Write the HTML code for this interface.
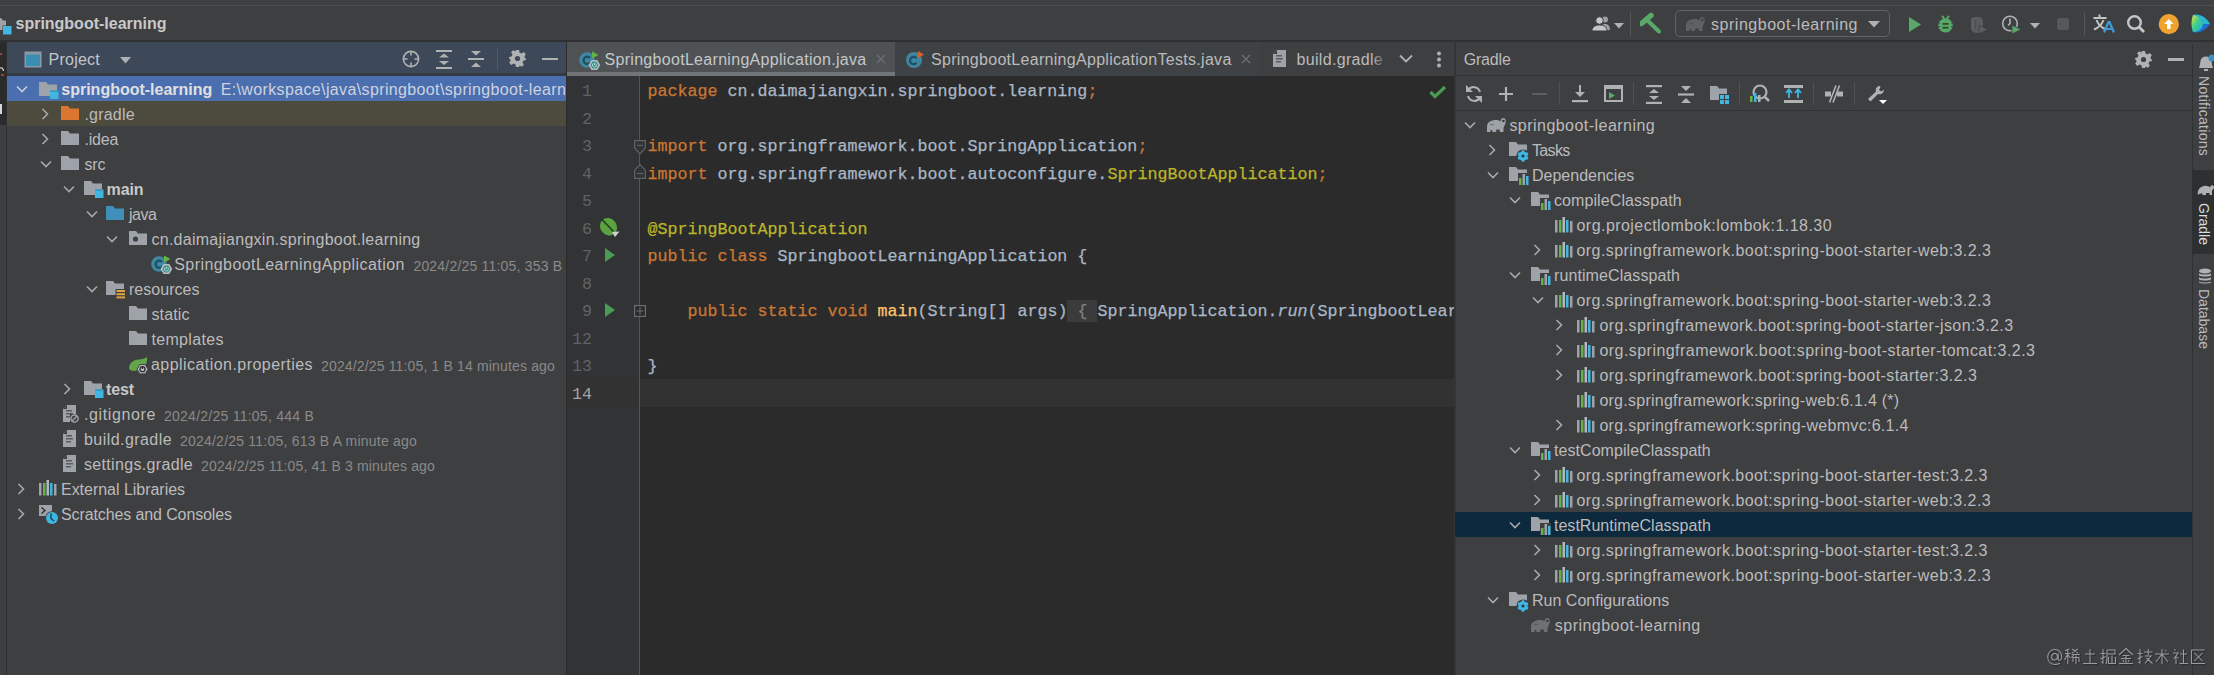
<!DOCTYPE html>
<html><head><meta charset="utf-8"><style>
html,body{margin:0;padding:0;width:2214px;height:675px;overflow:hidden;background:#3e3f41;position:relative}
</style></head><body>
<div style="position:absolute;left:0px;top:0px;width:2214px;height:41px;background:#3e3f41;"></div>
<div style="position:absolute;left:0px;top:5px;width:2214px;height:1px;background:#4d5053;"></div>
<svg style="position:absolute;left:0px;top:17px;" width="13" height="18" viewBox="0 0 13 18"><path d="M-6 1h7l2 2.5h3v9.5h-12z" fill="#9da3a8"/><rect x="2.5" y="8.5" width="9" height="9" fill="#3e3f41"/><rect x="3" y="9" width="8.5" height="8.5" fill="#40b6e0"/></svg>
<div style="position:absolute;left:15.5px;top:14.46px;line-height:20px;font-family:'Liberation Sans', sans-serif;font-size:16px;font-weight:700;font-style:normal;color:#c9c9c9;letter-spacing:-0.006px;white-space:pre;">springboot-learning</div>
<svg style="position:absolute;left:1591px;top:16px;" width="22" height="16" viewBox="0 0 22 16"><circle cx="14" cy="3.5" r="3" fill="#9da0a3"/><path d="M9 15 C9 10 11 8 14 8 C17 8 19 10 19 14 Z" fill="#9da0a3"/><circle cx="8.5" cy="4.5" r="3.8" fill="#c3c5c7" stroke="#3e3f41" stroke-width="1"/><path d="M1 15 C1 11 4 9 8.5 9 C13 9 16 11 16 15 Z" fill="#c3c5c7" stroke="#3e3f41" stroke-width="1"/></svg>
<svg style="position:absolute;left:1614px;top:22.5px;" width="10" height="6" viewBox="0 0 10 6"><path d="M0 0 H10 L5 5.5 Z" fill="#afb1b3"/></svg>
<div style="position:absolute;left:1630px;top:12px;width:1px;height:24px;background:#54575a;"></div>
<svg style="position:absolute;left:1640px;top:12px;" width="24" height="24" viewBox="0 0 24 24"><g transform="translate(0,2)"><path d="M1.5 9.5 L11 1.5" stroke="#59a869" stroke-width="5.5" stroke-linecap="round"/><path d="M6.5 5.5 L19 17.5" stroke="#59a869" stroke-width="4" stroke-linecap="round"/></g></svg>
<div style="position:absolute;left:1675px;top:10px;width:215px;height:27px;border:1.5px solid #606366;border-radius:5px;box-sizing:border-box"></div>
<svg style="position:absolute;left:1685px;top:16px;" width="21" height="16" viewBox="0 0 21 16"><path d="M1 15 L1 10 C1 5 5 3 10 3 C12 3 13.5 3.5 14.5 4.5 C14.5 2 16 1 17.5 1 C19 1 19.8 3 19.8 4.5 C19.8 7 18 9 17.5 11 L17.5 15 L14 15 L13.5 12.5 L10.5 12.5 L10 15 L6.5 15 L6 13 L4.5 13 L4.5 15 Z" fill="#5f6264"/><circle cx="17.4" cy="4" r="1.3" fill="#3e3f41"/><path d="M4 7 Q6 9 8 7" fill="none" stroke="#3e3f41" stroke-width="1" opacity=".6"/></svg>
<div style="position:absolute;left:1711px;top:15.46px;line-height:20px;font-family:'Liberation Sans', sans-serif;font-size:16px;font-weight:400;font-style:normal;color:#bbbbbb;letter-spacing:0.527px;white-space:pre;">springboot-learning</div>
<svg style="position:absolute;left:1868px;top:21px;" width="12" height="7" viewBox="0 0 12 7"><path d="M0 0 H12 L6 6.5 Z" fill="#afb1b3"/></svg>
<svg style="position:absolute;left:1906px;top:15px;" width="18" height="20" viewBox="0 0 18 20"><path d="M3 2 L15 9.5 L3 17 Z" fill="#59a869"/></svg>
<svg style="position:absolute;left:1937px;top:15px;" width="18" height="19" viewBox="0 0 18 19"><path d="M5 0.8 L7.5 4 M12 0.8 L9.5 4" stroke="#59a869" stroke-width="2"/><ellipse cx="8.5" cy="10.5" rx="7.3" ry="7" fill="#59a869"/><path d="M0.5 8 H3 M0.5 11.5 H3 M0.5 15 H3.5 M14 8 H16.5 M14 11.5 H16.5 M13.5 15 H16.5" stroke="#3e3f41" stroke-width="0.9"/><rect x="5.5" y="8" width="6" height="1.8" fill="#2d4a35"/><rect x="5.5" y="11.8" width="6" height="1.8" fill="#2d4a35"/></svg>
<svg style="position:absolute;left:1969px;top:16px;" width="20" height="19" viewBox="0 0 20 19"><path d="M2 4 C2 1.5 5 1 9 1 C12.5 1 14 3 14 6 L14 11 L9 17 C5 17 2 15 2 12 Z" fill="#5b5e61"/><path d="M6.5 4 V13" stroke="#4a4d50" stroke-width="1.5"/><path d="M10 9 L18.5 13.5 L10 18 Z" fill="#5b5e61" stroke="#3e3f41" stroke-width="0.8"/></svg>
<svg style="position:absolute;left:2001px;top:14px;" width="22" height="21" viewBox="0 0 22 21"><circle cx="9" cy="9.5" r="7.3" fill="none" stroke="#afb1b3" stroke-width="1.6"/><path d="M9 4.5 V9.5 L7 11.5" stroke="#afb1b3" stroke-width="1.6" fill="none"/><path d="M11 11 L20 15.5 L11 20 Z" fill="#59a869" stroke="#3e3f41" stroke-width="0.8"/></svg>
<svg style="position:absolute;left:2030px;top:22.5px;" width="10" height="6" viewBox="0 0 10 6"><path d="M0 0 H10 L5 5.5 Z" fill="#afb1b3"/></svg>
<div style="position:absolute;left:2057px;top:17.5px;width:12px;height:12.5px;background:#55585b;border-radius:2px"></div>
<div style="position:absolute;left:2084px;top:12px;width:1px;height:24px;background:#54575a;"></div>
<svg style="position:absolute;left:2092px;top:14px;" width="24" height="20" viewBox="0 0 24 20"><rect x="6.5" y="0.5" width="2" height="3" fill="#c3c5c7"/><rect x="1.5" y="3" width="13" height="2" fill="#c3c5c7"/><path d="M4.5 6 C6 10 9 13.5 14 15.5 M11.5 6 C10 10 7 13.5 2 15.5" fill="none" stroke="#c3c5c7" stroke-width="2"/><path d="M12 18.5 L16.5 8 L17.5 8 L22 18.5 M13.5 15 H20.5" fill="none" stroke="#3d9ad9" stroke-width="2.2"/></svg>
<svg style="position:absolute;left:2125px;top:14px;" width="22" height="20" viewBox="0 0 22 20"><circle cx="9.5" cy="8.5" r="6.3" fill="none" stroke="#c3c5c7" stroke-width="2.4"/><path d="M14 13 L19 18" stroke="#c3c5c7" stroke-width="2.8"/></svg>
<svg style="position:absolute;left:2158px;top:14px;" width="22" height="21" viewBox="0 0 22 21"><circle cx="10.8" cy="10.2" r="10.1" fill="#f0a22e"/><path d="M10.8 5 L15.5 10 H12.5 V15 H9.1 V10 H6.1 Z" fill="#ffffff"/></svg>
<svg style="position:absolute;left:2190px;top:13px" width="24" height="21" viewBox="0 0 24 21"><defs><linearGradient id="lg1" x1="0" y1="0" x2="1" y2="1"><stop offset="0" stop-color="#e8e337"/><stop offset="0.45" stop-color="#3fd08a"/><stop offset="1" stop-color="#1fa6e6"/></linearGradient></defs><path d="M3 2 C9 0 16 4 20 11 C16 17 9 21 3 19 C1 13 1 8 3 2 Z" fill="#1d6fd1"/><path d="M3 2 C8 2 13 6 13 11 C13 16 8 19 3 19 C1 13 1 8 3 2 Z" fill="url(#lg1)"/><path d="M13 11 C11 6 7 2 3 2 C9 0 16 4 20 11 Z" fill="#2bb7c9"/></svg>
<div style="position:absolute;left:0px;top:41px;width:7px;height:634px;background:#3e3f41;"></div>
<div style="position:absolute;left:0px;top:41px;width:6px;height:84px;background:#2b2b2b;"></div>
<div style="position:absolute;left:6px;top:41px;width:1px;height:634px;background:#2d2f30;"></div>
<div style="position:absolute;left:0px;top:104px;width:2px;height:10px;background:#d8d8d8;"></div>
<svg style="position:absolute;left:0px;top:66px;" width="6" height="8" viewBox="0 0 6 8"><path d="M0 2 Q3 1 3.5 5" fill="none" stroke="#d0d0d0" stroke-width="1.2"/></svg>
<div style="position:absolute;left:0px;top:53px;width:2px;height:2px;background:#8a4b4b;"></div>
<div style="position:absolute;left:1px;top:74px;width:3px;height:1.5px;background:#a04040;"></div>
<div style="position:absolute;left:7px;top:41px;width:560px;height:635px;background:#3e3f41;"></div>
<div style="position:absolute;left:7px;top:41px;width:559px;height:32px;background:#3d4958;"></div>
<div style="position:absolute;left:7px;top:73px;width:559px;height:3px;background:#343a42;"></div>
<div style="position:absolute;left:566px;top:41px;width:1px;height:634px;background:#2b2b2b;"></div>
<svg style="position:absolute;left:24px;top:51px;" width="18" height="17" viewBox="0 0 18 17"><rect x="0.5" y="0.5" width="17" height="16" fill="#8e9aa3"/><rect x="2" y="3.5" width="14" height="11.5" fill="#3b8eb3"/></svg>
<div style="position:absolute;left:48.5px;top:50.46px;line-height:20px;font-family:'Liberation Sans', sans-serif;font-size:16px;font-weight:400;font-style:normal;color:#c2c5c8;letter-spacing:0.243px;white-space:pre;">Project</div>
<svg style="position:absolute;left:120px;top:57px;" width="11" height="7" viewBox="0 0 11 7"><path d="M0 0 H11 L5.5 6.5 Z" fill="#afb1b3"/></svg>
<svg style="position:absolute;left:402px;top:50px;" width="18" height="18" viewBox="0 0 18 18"><circle cx="9" cy="9" r="7.6" fill="none" stroke="#afb1b3" stroke-width="1.6"/><path d="M9 1 V5.5 M9 12.5 V17 M1 9 H5.5 M12.5 9 H17" stroke="#afb1b3" stroke-width="1.6"/></svg>
<svg style="position:absolute;left:436px;top:50px;" width="16" height="19" viewBox="0 0 16 19"><rect x="0" y="0" width="16" height="2" fill="#afb1b3"/><rect x="0" y="17" width="16" height="2" fill="#afb1b3"/><path d="M3 7.5 L8 3.5 L13 7.5 Z M3 11 L8 15 L13 11 Z" fill="#afb1b3"/></svg>
<svg style="position:absolute;left:468px;top:50px;" width="16" height="18" viewBox="0 0 16 18"><rect x="0" y="8" width="16" height="2" fill="#afb1b3"/><path d="M3 1 L8 5.5 L13 1 Z M3 17 L8 12.5 L13 17 Z" fill="#afb1b3"/></svg>
<div style="position:absolute;left:497px;top:48px;width:1px;height:22px;background:#4d5a69;"></div>
<svg style="position:absolute;left:509px;top:50px;" width="17" height="17" viewBox="0 0 17 17"><path d="M7 0 H10 L10.5 2.5 L12.5 3.5 L14.7 2.1 L16.8 4.2 L15.4 6.4 L16.2 8.4 L17 8.5 V8.5 L17 10 L14.5 10.5 L13.5 12.5 L14.9 14.7 L12.8 16.8 L10.6 15.4 L10 17 H7 L6.5 14.5 L4.5 13.5 L2.3 14.9 L0.2 12.8 L1.6 10.6 L0.8 8.6 L0 8.5 V7 L2.5 6.5 L3.5 4.5 L2.1 2.3 L4.2 0.2 L6.4 1.6 Z" fill="#afb1b3"/><circle cx="8.5" cy="8.5" r="2.6" fill="#3d4958"/></svg>
<div style="position:absolute;left:542px;top:57.8px;width:16px;height:2.5px;background:#afb1b3;"></div>
<div style="position:absolute;left:7px;top:76px;width:559px;height:25px;background:#4b6eaf;"></div>
<div style="position:absolute;left:7px;top:101px;width:559px;height:25px;background:#4d4a3e;"></div>
<svg style="position:absolute;left:16px;top:85px;" width="12" height="8" viewBox="0 0 12 8"><path d="M1 1.5 L6 6.5 L11 1.5" fill="none" stroke="#c7ccd6" stroke-width="1.6"/></svg>
<svg style="position:absolute;left:39px;top:82px;" width="22" height="22" viewBox="0 0 22 22"><path d="M0 0 H7 L9 2.5 H18 V14 H0 Z" fill="#9da3a8"/><rect x="11" y="8.5" width="8.5" height="8.5" fill="#40b6e0"/><rect x="11" y="8.5" width="8.5" height="1.2" fill="#2f8fb8"/></svg>
<div style="position:absolute;left:61.3px;top:80.46px;line-height:20px;font-family:'Liberation Sans', sans-serif;font-size:16px;font-weight:700;font-style:normal;color:#e0e0e0;letter-spacing:-0.006px;white-space:pre;">springboot-learning</div>
<div style="position:absolute;left:220.7px;top:80.46px;line-height:20px;font-family:'Liberation Sans', sans-serif;font-size:16px;font-weight:400;font-style:normal;color:#cdd3df;letter-spacing:0.366px;white-space:pre;">E:\workspace\java\springboot\springboot-learning</div>
<svg style="position:absolute;left:41px;top:108px;" width="8" height="12" viewBox="0 0 8 12"><path d="M1.5 1 L6.5 6 L1.5 11" fill="none" stroke="#a7a9ab" stroke-width="1.6"/></svg>
<svg style="position:absolute;left:61px;top:106px;" width="22" height="22" viewBox="0 0 22 22"><path d="M0 0 H7 L9 2.5 H18 V14 H0 Z" fill="#d9772f"/></svg>
<div style="position:absolute;left:84.4px;top:105.46px;line-height:20px;font-family:'Liberation Sans', sans-serif;font-size:16px;font-weight:400;font-style:normal;color:#bbbbbb;letter-spacing:0.211px;white-space:pre;">.gradle</div>
<svg style="position:absolute;left:41px;top:133px;" width="8" height="12" viewBox="0 0 8 12"><path d="M1.5 1 L6.5 6 L1.5 11" fill="none" stroke="#a7a9ab" stroke-width="1.6"/></svg>
<svg style="position:absolute;left:61px;top:131px;" width="22" height="22" viewBox="0 0 22 22"><path d="M0 0 H7 L9 2.5 H18 V14 H0 Z" fill="#9da3a8"/></svg>
<div style="position:absolute;left:84.4px;top:130.46px;line-height:20px;font-family:'Liberation Sans', sans-serif;font-size:16px;font-weight:400;font-style:normal;color:#bbbbbb;letter-spacing:-0.141px;white-space:pre;">.idea</div>
<svg style="position:absolute;left:40px;top:160px;" width="12" height="8" viewBox="0 0 12 8"><path d="M1 1.5 L6 6.5 L11 1.5" fill="none" stroke="#a7a9ab" stroke-width="1.6"/></svg>
<svg style="position:absolute;left:61px;top:156px;" width="22" height="22" viewBox="0 0 22 22"><path d="M0 0 H7 L9 2.5 H18 V14 H0 Z" fill="#9da3a8"/></svg>
<div style="position:absolute;left:84.4px;top:155.46px;line-height:20px;font-family:'Liberation Sans', sans-serif;font-size:16px;font-weight:400;font-style:normal;color:#bbbbbb;letter-spacing:-0.109px;white-space:pre;">src</div>
<svg style="position:absolute;left:63px;top:185px;" width="12" height="8" viewBox="0 0 12 8"><path d="M1 1.5 L6 6.5 L11 1.5" fill="none" stroke="#a7a9ab" stroke-width="1.6"/></svg>
<svg style="position:absolute;left:84px;top:181px;" width="22" height="22" viewBox="0 0 22 22"><path d="M0 0 H7 L9 2.5 H18 V14 H0 Z" fill="#9da3a8"/><rect x="11" y="8.5" width="8.5" height="8.5" fill="#40b6e0"/><rect x="11" y="8.5" width="8.5" height="1.2" fill="#2f8fb8"/></svg>
<div style="position:absolute;left:106.5px;top:180.46px;line-height:20px;font-family:'Liberation Sans', sans-serif;font-size:16px;font-weight:700;font-style:normal;color:#c8c8c8;letter-spacing:-0.086px;white-space:pre;">main</div>
<svg style="position:absolute;left:86px;top:210px;" width="12" height="8" viewBox="0 0 12 8"><path d="M1 1.5 L6 6.5 L11 1.5" fill="none" stroke="#a7a9ab" stroke-width="1.6"/></svg>
<svg style="position:absolute;left:106px;top:206px;" width="22" height="22" viewBox="0 0 22 22"><path d="M0 0 H7 L9 2.5 H18 V14 H0 Z" fill="#3e90bb"/></svg>
<div style="position:absolute;left:129px;top:205.46px;line-height:20px;font-family:'Liberation Sans', sans-serif;font-size:16px;font-weight:400;font-style:normal;color:#bbbbbb;letter-spacing:-0.465px;white-space:pre;">java</div>
<svg style="position:absolute;left:106px;top:235px;" width="12" height="8" viewBox="0 0 12 8"><path d="M1 1.5 L6 6.5 L11 1.5" fill="none" stroke="#a7a9ab" stroke-width="1.6"/></svg>
<svg style="position:absolute;left:129px;top:231px;" width="22" height="22" viewBox="0 0 22 22"><path d="M0 0 H7 L9 2.5 H18 V14 H0 Z" fill="#9da3a8"/><circle cx="6.5" cy="8" r="2.6" fill="#3e3f41"/></svg>
<div style="position:absolute;left:151.5px;top:230.46px;line-height:20px;font-family:'Liberation Sans', sans-serif;font-size:16px;font-weight:400;font-style:normal;color:#bbbbbb;letter-spacing:0.258px;white-space:pre;">cn.daimajiangxin.springboot.learning</div>
<svg style="position:absolute;left:151px;top:254px;" width="22" height="22" viewBox="0 0 22 22"><circle cx="8" cy="10" r="7.8" fill="#3f87a3"/><path d="M11 8 A3.6 3.6 0 1 0 11 12.5" fill="none" stroke="#1f4f62" stroke-width="2.2"/><path d="M13 1.5 L19.5 5 L13 8.5 Z" fill="#62b543"/><path d="M10.5 15 L13 10.8 L17.8 10.8 L20.3 15 L17.8 19.2 L13 19.2 Z" fill="#3c8c8c" stroke="#b9bdc1" stroke-width="1.6"/><path d="M15.4 12.8 V15" stroke="#a9d8d0" stroke-width="1"/><path d="M14 13.6 A2 2 0 1 0 16.8 13.6" fill="none" stroke="#a9d8d0" stroke-width="1"/></svg>
<div style="position:absolute;left:174.2px;top:255.46px;line-height:20px;font-family:'Liberation Sans', sans-serif;font-size:16px;font-weight:400;font-style:normal;color:#bbbbbb;letter-spacing:0.437px;white-space:pre;">SpringbootLearningApplication</div>
<div style="position:absolute;left:413.4px;top:256.15px;line-height:20px;font-family:'Liberation Sans', sans-serif;font-size:14px;font-weight:400;font-style:normal;color:#8a8a8a;letter-spacing:0.202px;white-space:pre;">2024/2/25 11:05, 353 B</div>
<svg style="position:absolute;left:86px;top:285px;" width="12" height="8" viewBox="0 0 12 8"><path d="M1 1.5 L6 6.5 L11 1.5" fill="none" stroke="#a7a9ab" stroke-width="1.6"/></svg>
<svg style="position:absolute;left:106px;top:281px;" width="22" height="22" viewBox="0 0 22 22"><path d="M0 0 H7 L9 2.5 H18 V14 H0 Z" fill="#9da3a8"/><rect x="9.5" y="8" width="10" height="10" fill="#3e3f41"/><rect x="10.5" y="9" width="8.5" height="2" fill="#d9a343"/><rect x="10.5" y="12.2" width="8.5" height="2" fill="#d9a343"/><rect x="10.5" y="15.4" width="8.5" height="2" fill="#d9a343"/></svg>
<div style="position:absolute;left:129px;top:280.46px;line-height:20px;font-family:'Liberation Sans', sans-serif;font-size:16px;font-weight:400;font-style:normal;color:#bbbbbb;letter-spacing:0.039px;white-space:pre;">resources</div>
<svg style="position:absolute;left:129px;top:306px;" width="22" height="22" viewBox="0 0 22 22"><path d="M0 0 H7 L9 2.5 H18 V14 H0 Z" fill="#9da3a8"/></svg>
<div style="position:absolute;left:151.5px;top:305.46px;line-height:20px;font-family:'Liberation Sans', sans-serif;font-size:16px;font-weight:400;font-style:normal;color:#bbbbbb;letter-spacing:0.109px;white-space:pre;">static</div>
<svg style="position:absolute;left:129px;top:331px;" width="22" height="22" viewBox="0 0 22 22"><path d="M0 0 H7 L9 2.5 H18 V14 H0 Z" fill="#9da3a8"/></svg>
<div style="position:absolute;left:151.5px;top:330.46px;line-height:20px;font-family:'Liberation Sans', sans-serif;font-size:16px;font-weight:400;font-style:normal;color:#bbbbbb;letter-spacing:0.314px;white-space:pre;">templates</div>
<svg style="position:absolute;left:129px;top:354px;" width="22" height="22" viewBox="0 0 22 22"><path d="M0 15 C0 9 4 6 10 5.5 C13 5.2 16 4.5 18 3 C18.5 8 17 12 12.5 14.5 C8 17 3 18 0 15 Z" fill="#62a649"/><path d="M8 18.7 L10.8 14 L16.2 14 L19 18.7 L16.2 23.4 L10.8 23.4 Z" transform="translate(0,-3.5)" fill="#b9bdc1" stroke="#3e3f41" stroke-width="1"/><circle cx="13.5" cy="15.2" r="2.5" fill="none" stroke="#2b2d2f" stroke-width="1.3"/><path d="M13.5 12.2 V15" stroke="#2b2d2f" stroke-width="1.3"/></svg>
<div style="position:absolute;left:151px;top:355.46px;line-height:20px;font-family:'Liberation Sans', sans-serif;font-size:16px;font-weight:400;font-style:normal;color:#bbbbbb;letter-spacing:0.450px;white-space:pre;">application.properties</div>
<div style="position:absolute;left:321px;top:356.15px;line-height:20px;font-family:'Liberation Sans', sans-serif;font-size:14px;font-weight:400;font-style:normal;color:#8a8a8a;letter-spacing:0.154px;white-space:pre;">2024/2/25 11:05, 1 B 14 minutes ago</div>
<svg style="position:absolute;left:63px;top:383px;" width="8" height="12" viewBox="0 0 8 12"><path d="M1.5 1 L6.5 6 L1.5 11" fill="none" stroke="#a7a9ab" stroke-width="1.6"/></svg>
<svg style="position:absolute;left:84px;top:381px;" width="22" height="22" viewBox="0 0 22 22"><path d="M0 0 H7 L9 2.5 H18 V14 H0 Z" fill="#9da3a8"/><rect x="11" y="8.5" width="8.5" height="8.5" fill="#40b6e0"/><rect x="11" y="8.5" width="8.5" height="1.2" fill="#2f8fb8"/></svg>
<div style="position:absolute;left:106px;top:380.46px;line-height:20px;font-family:'Liberation Sans', sans-serif;font-size:16px;font-weight:700;font-style:normal;color:#c8c8c8;letter-spacing:-0.113px;white-space:pre;">test</div>
<svg style="position:absolute;left:63px;top:405px;" width="16" height="18" viewBox="0 0 16 18"><path d="M4 0 H13 V17 H0 V4 Z" fill="#9da3a8"/><path d="M0 4 H4 V0 Z" fill="#3e3f41"/><rect x="3" y="8" width="7" height="1.5" fill="#5a5d60"/><rect x="3" y="11" width="5" height="1.5" fill="#5a5d60"/><rect x="3" y="5" width="6" height="1.5" fill="#5a5d60"/><rect x="7" y="9" width="9" height="9" fill="#3e3f41"/><circle cx="11.5" cy="13.5" r="3.6" fill="none" stroke="#9da3a8" stroke-width="1.5"/><path d="M9 16 L14 11" stroke="#9da3a8" stroke-width="1.5"/></svg>
<div style="position:absolute;left:84px;top:405.46px;line-height:20px;font-family:'Liberation Sans', sans-serif;font-size:16px;font-weight:400;font-style:normal;color:#bbbbbb;letter-spacing:0.617px;white-space:pre;">.gitignore</div>
<div style="position:absolute;left:164px;top:406.15px;line-height:20px;font-family:'Liberation Sans', sans-serif;font-size:14px;font-weight:400;font-style:normal;color:#8a8a8a;letter-spacing:0.248px;white-space:pre;">2024/2/25 11:05, 444 B</div>
<svg style="position:absolute;left:63px;top:430px;" width="16" height="18" viewBox="0 0 16 18"><path d="M4 0 H13 V17 H0 V4 Z" fill="#9da3a8"/><path d="M0 4 H4 V0 Z" fill="#3e3f41"/><rect x="3" y="8" width="7" height="1.5" fill="#5a5d60"/><rect x="3" y="11" width="5" height="1.5" fill="#5a5d60"/><rect x="3" y="5" width="6" height="1.5" fill="#5a5d60"/></svg>
<div style="position:absolute;left:84px;top:430.46px;line-height:20px;font-family:'Liberation Sans', sans-serif;font-size:16px;font-weight:400;font-style:normal;color:#bbbbbb;letter-spacing:0.439px;white-space:pre;">build.gradle</div>
<div style="position:absolute;left:180px;top:431.15px;line-height:20px;font-family:'Liberation Sans', sans-serif;font-size:14px;font-weight:400;font-style:normal;color:#8a8a8a;letter-spacing:0.218px;white-space:pre;">2024/2/25 11:05, 613 B A minute ago</div>
<svg style="position:absolute;left:63px;top:455px;" width="16" height="18" viewBox="0 0 16 18"><path d="M4 0 H13 V17 H0 V4 Z" fill="#9da3a8"/><path d="M0 4 H4 V0 Z" fill="#3e3f41"/><rect x="3" y="8" width="7" height="1.5" fill="#5a5d60"/><rect x="3" y="11" width="5" height="1.5" fill="#5a5d60"/><rect x="3" y="5" width="6" height="1.5" fill="#5a5d60"/></svg>
<div style="position:absolute;left:84px;top:455.46px;line-height:20px;font-family:'Liberation Sans', sans-serif;font-size:16px;font-weight:400;font-style:normal;color:#bbbbbb;letter-spacing:0.329px;white-space:pre;">settings.gradle</div>
<div style="position:absolute;left:201px;top:456.15px;line-height:20px;font-family:'Liberation Sans', sans-serif;font-size:14px;font-weight:400;font-style:normal;color:#8a8a8a;letter-spacing:0.154px;white-space:pre;">2024/2/25 11:05, 41 B 3 minutes ago</div>
<svg style="position:absolute;left:17px;top:483px;" width="8" height="12" viewBox="0 0 8 12"><path d="M1.5 1 L6.5 6 L1.5 11" fill="none" stroke="#a7a9ab" stroke-width="1.6"/></svg>
<svg style="position:absolute;left:39px;top:480px;" width="19" height="17" viewBox="0 0 19 17"><rect x="0" y="3" width="2.5" height="12.5" fill="#9da3a8"/><rect x="4" y="3" width="2.5" height="12.5" fill="#62b543"/><rect x="7.5" y="0" width="2.5" height="15.5" fill="#b4b8bc"/><rect x="11" y="3" width="2.5" height="12.5" fill="#40b6e0"/><rect x="15" y="4" width="2.5" height="11.5" fill="#9da3a8"/></svg>
<div style="position:absolute;left:61px;top:480.46px;line-height:20px;font-family:'Liberation Sans', sans-serif;font-size:16px;font-weight:400;font-style:normal;color:#bbbbbb;letter-spacing:-0.028px;white-space:pre;">External Libraries</div>
<svg style="position:absolute;left:17px;top:508px;" width="8" height="12" viewBox="0 0 8 12"><path d="M1.5 1 L6.5 6 L1.5 11" fill="none" stroke="#a7a9ab" stroke-width="1.6"/></svg>
<svg style="position:absolute;left:38px;top:504px;" width="22" height="22" viewBox="0 0 22 22"><rect x="1" y="1" width="13" height="11" fill="#9da3a8"/><path d="M3.5 3.5 L7 6.5 L3.5 9.5" fill="none" stroke="#2b2b2b" stroke-width="1.3"/><circle cx="14" cy="14" r="6.8" fill="#3e3f41"/><circle cx="14" cy="14" r="6" fill="#40b6e0"/><path d="M13 9.5 V14.5 L16 17" stroke="#1d3d4d" stroke-width="1.4" fill="none"/></svg>
<div style="position:absolute;left:61px;top:505.46px;line-height:20px;font-family:'Liberation Sans', sans-serif;font-size:16px;font-weight:400;font-style:normal;color:#bbbbbb;letter-spacing:-0.111px;white-space:pre;">Scratches and Consoles</div>
<div style="position:absolute;left:567px;top:41px;width:888px;height:35px;background:#3e3f41;"></div>
<div style="position:absolute;left:567px;top:41px;width:328px;height:31px;background:#4e5254;"></div>
<div style="position:absolute;left:567px;top:72px;width:328px;height:4px;background:#727577;"></div>
<div style="position:absolute;left:895px;top:41px;width:365px;height:35px;background:#3f4244;"></div>
<svg style="position:absolute;left:579px;top:50px;" width="22" height="22" viewBox="0 0 22 22"><circle cx="8" cy="10" r="7.8" fill="#3f87a3"/><path d="M11 8 A3.6 3.6 0 1 0 11 12.5" fill="none" stroke="#1f4f62" stroke-width="2.2"/><path d="M13 1.5 L19.5 5 L13 8.5 Z" fill="#62b543"/><path d="M10.5 15 L13 10.8 L17.8 10.8 L20.3 15 L17.8 19.2 L13 19.2 Z" fill="#3c8c8c" stroke="#b9bdc1" stroke-width="1.6"/><path d="M15.4 12.8 V15" stroke="#a9d8d0" stroke-width="1"/><path d="M14 13.6 A2 2 0 1 0 16.8 13.6" fill="none" stroke="#a9d8d0" stroke-width="1"/></svg>
<div style="position:absolute;left:604.5px;top:50.46px;line-height:20px;font-family:'Liberation Sans', sans-serif;font-size:16px;font-weight:400;font-style:normal;color:#c5c7c9;letter-spacing:0.302px;white-space:pre;">SpringbootLearningApplication.java</div>
<svg style="position:absolute;left:876px;top:54px;" width="10" height="10" viewBox="0 0 10 10"><path d="M1 1 L9 9 M9 1 L1 9" stroke="#6e7173" stroke-width="1.2"/></svg>
<svg style="position:absolute;left:905px;top:50px;" width="22" height="22" viewBox="0 0 22 22"><circle cx="9" cy="10" r="8" fill="#3e86a0"/><path d="M11.5 8.3 A3.6 3.6 0 1 0 11.5 12.8" fill="none" stroke="#1f4f62" stroke-width="2.2"/><path d="M13 1 L19 4.5 L13 8 Z" fill="#d9622b"/></svg>
<div style="position:absolute;left:931px;top:50.46px;line-height:20px;font-family:'Liberation Sans', sans-serif;font-size:16px;font-weight:400;font-style:normal;color:#bbbbbb;letter-spacing:0.295px;white-space:pre;">SpringbootLearningApplicationTests.java</div>
<svg style="position:absolute;left:1241px;top:54px;" width="10" height="10" viewBox="0 0 10 10"><path d="M1 1 L9 9 M9 1 L1 9" stroke="#6e7173" stroke-width="1.2"/></svg>
<svg style="position:absolute;left:1273px;top:50px;" width="16" height="18" viewBox="0 0 16 18"><path d="M4 0 H13 V17 H0 V4 Z" fill="#9da3a8"/><path d="M0 4 H4 V0 Z" fill="#3e3f41"/><rect x="3" y="8" width="7" height="1.5" fill="#5a5d60"/><rect x="3" y="11" width="5" height="1.5" fill="#5a5d60"/><rect x="3" y="5" width="6" height="1.5" fill="#5a5d60"/></svg>
<div style="position:absolute;left:1296.6px;top:50.46px;line-height:20px;font-family:'Liberation Sans', sans-serif;font-size:16px;font-weight:400;font-style:normal;color:#bbbbbb;letter-spacing:0.305px;white-space:pre;">build.gradle</div>
<div style="position:absolute;left:1371px;top:45px;width:16px;height:26px;background:linear-gradient(90deg, rgba(63,66,68,0) 0%, rgba(60,63,65,0.85) 100%);"></div>
<svg style="position:absolute;left:1399px;top:54px;" width="14" height="9" viewBox="0 0 14 9"><path d="M1 1.5 L7 7.5 L13 1.5" fill="none" stroke="#afb1b3" stroke-width="1.8"/></svg>
<svg style="position:absolute;left:1435px;top:51px;" width="8" height="18" viewBox="0 0 8 18"><circle cx="4" cy="2.5" r="2" fill="#afb1b3"/><circle cx="4" cy="8.5" r="2" fill="#afb1b3"/><circle cx="4" cy="14.5" r="2" fill="#afb1b3"/></svg>
<div style="position:absolute;left:567px;top:76px;width:73px;height:599px;background:#313335;"></div>
<div style="position:absolute;left:640px;top:76px;width:815px;height:599px;background:#2b2b2b;"></div>
<div style="position:absolute;left:639px;top:76px;width:1px;height:599px;background:#555555;"></div>
<div style="position:absolute;left:567px;top:379.0px;width:72px;height:27.5px;background:#323232;"></div>
<div style="position:absolute;left:640px;top:379.0px;width:814px;height:27.5px;background:#323232;"></div>
<div style="position:absolute;left:582px;top:82.06px;line-height:20px;font-family:'Liberation Mono', monospace;font-size:16.67px;font-weight:400;font-style:normal;color:#606366;letter-spacing:0.000px;white-space:pre;">1</div>
<div style="position:absolute;left:582px;top:109.56px;line-height:20px;font-family:'Liberation Mono', monospace;font-size:16.67px;font-weight:400;font-style:normal;color:#606366;letter-spacing:0.000px;white-space:pre;">2</div>
<div style="position:absolute;left:582px;top:137.06px;line-height:20px;font-family:'Liberation Mono', monospace;font-size:16.67px;font-weight:400;font-style:normal;color:#606366;letter-spacing:0.000px;white-space:pre;">3</div>
<div style="position:absolute;left:582px;top:164.56px;line-height:20px;font-family:'Liberation Mono', monospace;font-size:16.67px;font-weight:400;font-style:normal;color:#606366;letter-spacing:0.000px;white-space:pre;">4</div>
<div style="position:absolute;left:582px;top:192.06px;line-height:20px;font-family:'Liberation Mono', monospace;font-size:16.67px;font-weight:400;font-style:normal;color:#606366;letter-spacing:0.000px;white-space:pre;">5</div>
<div style="position:absolute;left:582px;top:219.56px;line-height:20px;font-family:'Liberation Mono', monospace;font-size:16.67px;font-weight:400;font-style:normal;color:#606366;letter-spacing:0.000px;white-space:pre;">6</div>
<div style="position:absolute;left:582px;top:247.06px;line-height:20px;font-family:'Liberation Mono', monospace;font-size:16.67px;font-weight:400;font-style:normal;color:#606366;letter-spacing:0.000px;white-space:pre;">7</div>
<div style="position:absolute;left:582px;top:274.56px;line-height:20px;font-family:'Liberation Mono', monospace;font-size:16.67px;font-weight:400;font-style:normal;color:#606366;letter-spacing:0.000px;white-space:pre;">8</div>
<div style="position:absolute;left:582px;top:302.06px;line-height:20px;font-family:'Liberation Mono', monospace;font-size:16.67px;font-weight:400;font-style:normal;color:#606366;letter-spacing:0.000px;white-space:pre;">9</div>
<div style="position:absolute;left:572px;top:329.56px;line-height:20px;font-family:'Liberation Mono', monospace;font-size:16.67px;font-weight:400;font-style:normal;color:#606366;letter-spacing:0.000px;white-space:pre;">12</div>
<div style="position:absolute;left:572px;top:357.06px;line-height:20px;font-family:'Liberation Mono', monospace;font-size:16.67px;font-weight:400;font-style:normal;color:#606366;letter-spacing:0.000px;white-space:pre;">13</div>
<div style="position:absolute;left:572px;top:384.56px;line-height:20px;font-family:'Liberation Mono', monospace;font-size:16.67px;font-weight:400;font-style:normal;color:#a4a3a3;letter-spacing:0.000px;white-space:pre;">14</div>
<div style="position:absolute;left:647.5px;top:82.06px;line-height:20px;font-family:'Liberation Mono', monospace;font-size:16.67px;font-weight:400;font-style:normal;color:#cc7832;letter-spacing:0.000px;white-space:pre;-webkit-text-stroke:0.25px #cc7832">package</div>
<div style="position:absolute;left:717.5px;top:82.06px;line-height:20px;font-family:'Liberation Mono', monospace;font-size:16.67px;font-weight:400;font-style:normal;color:#a9b7c6;letter-spacing:0.000px;white-space:pre;-webkit-text-stroke:0.25px #a9b7c6"> cn.daimajiangxin.springboot.learning</div>
<div style="position:absolute;left:1087.5px;top:82.06px;line-height:20px;font-family:'Liberation Mono', monospace;font-size:16.67px;font-weight:400;font-style:normal;color:#cc7832;letter-spacing:0.000px;white-space:pre;-webkit-text-stroke:0.25px #cc7832">;</div>
<div style="position:absolute;left:647.5px;top:137.06px;line-height:20px;font-family:'Liberation Mono', monospace;font-size:16.67px;font-weight:400;font-style:normal;color:#cc7832;letter-spacing:0.000px;white-space:pre;-webkit-text-stroke:0.25px #cc7832">import</div>
<div style="position:absolute;left:707.5px;top:137.06px;line-height:20px;font-family:'Liberation Mono', monospace;font-size:16.67px;font-weight:400;font-style:normal;color:#a9b7c6;letter-spacing:0.000px;white-space:pre;-webkit-text-stroke:0.25px #a9b7c6"> org.springframework.boot.SpringApplication</div>
<div style="position:absolute;left:1137.5px;top:137.06px;line-height:20px;font-family:'Liberation Mono', monospace;font-size:16.67px;font-weight:400;font-style:normal;color:#cc7832;letter-spacing:0.000px;white-space:pre;-webkit-text-stroke:0.25px #cc7832">;</div>
<div style="position:absolute;left:647.5px;top:164.56px;line-height:20px;font-family:'Liberation Mono', monospace;font-size:16.67px;font-weight:400;font-style:normal;color:#cc7832;letter-spacing:0.000px;white-space:pre;-webkit-text-stroke:0.25px #cc7832">import</div>
<div style="position:absolute;left:707.5px;top:164.56px;line-height:20px;font-family:'Liberation Mono', monospace;font-size:16.67px;font-weight:400;font-style:normal;color:#a9b7c6;letter-spacing:0.000px;white-space:pre;-webkit-text-stroke:0.25px #a9b7c6"> org.springframework.boot.autoconfigure.</div>
<div style="position:absolute;left:1107.5px;top:164.56px;line-height:20px;font-family:'Liberation Mono', monospace;font-size:16.67px;font-weight:400;font-style:normal;color:#bbb529;letter-spacing:0.000px;white-space:pre;-webkit-text-stroke:0.25px #bbb529">SpringBootApplication</div>
<div style="position:absolute;left:1317.5px;top:164.56px;line-height:20px;font-family:'Liberation Mono', monospace;font-size:16.67px;font-weight:400;font-style:normal;color:#cc7832;letter-spacing:0.000px;white-space:pre;-webkit-text-stroke:0.25px #cc7832">;</div>
<div style="position:absolute;left:647.5px;top:219.56px;line-height:20px;font-family:'Liberation Mono', monospace;font-size:16.67px;font-weight:400;font-style:normal;color:#bbb529;letter-spacing:0.000px;white-space:pre;-webkit-text-stroke:0.25px #bbb529">@SpringBootApplication</div>
<div style="position:absolute;left:647.5px;top:247.06px;line-height:20px;font-family:'Liberation Mono', monospace;font-size:16.67px;font-weight:400;font-style:normal;color:#cc7832;letter-spacing:0.000px;white-space:pre;-webkit-text-stroke:0.25px #cc7832">public class </div>
<div style="position:absolute;left:777.5px;top:247.06px;line-height:20px;font-family:'Liberation Mono', monospace;font-size:16.67px;font-weight:400;font-style:normal;color:#a9b7c6;letter-spacing:0.000px;white-space:pre;-webkit-text-stroke:0.25px #a9b7c6">SpringbootLearningApplication {</div>
<div style="position:absolute;left:1067px;top:299.5px;width:30px;height:22px;background:#3b3b3c;"></div>
<div style="position:absolute;left:647.5px;top:302.06px;line-height:20px;font-family:'Liberation Mono', monospace;font-size:16.67px;font-weight:400;font-style:normal;color:#cc7832;letter-spacing:0.000px;white-space:pre;-webkit-text-stroke:0.25px #cc7832">    public static void </div>
<div style="position:absolute;left:877.5px;top:302.06px;line-height:20px;font-family:'Liberation Mono', monospace;font-size:16.67px;font-weight:400;font-style:normal;color:#ffc66d;letter-spacing:0.000px;white-space:pre;-webkit-text-stroke:0.25px #ffc66d">main</div>
<div style="position:absolute;left:917.5px;top:302.06px;line-height:20px;font-family:'Liberation Mono', monospace;font-size:16.67px;font-weight:400;font-style:normal;color:#a9b7c6;letter-spacing:0.000px;white-space:pre;-webkit-text-stroke:0.25px #a9b7c6">(String[] args) </div>
<div style="position:absolute;left:1077.5px;top:302.06px;line-height:20px;font-family:'Liberation Mono', monospace;font-size:16.67px;font-weight:400;font-style:normal;color:#808080;letter-spacing:0.000px;white-space:pre;-webkit-text-stroke:0.25px #808080">{</div>
<div style="position:absolute;left:1087.5px;top:302.06px;line-height:20px;font-family:'Liberation Mono', monospace;font-size:16.67px;font-weight:400;font-style:normal;color:#a9b7c6;letter-spacing:0.000px;white-space:pre;-webkit-text-stroke:0.25px #a9b7c6"> SpringApplication.</div>
<div style="position:absolute;left:1277.5px;top:302.06px;line-height:20px;font-family:'Liberation Mono', monospace;font-size:16.67px;font-weight:400;font-style:italic;color:#a9b7c6;letter-spacing:0.000px;white-space:pre;-webkit-text-stroke:0.25px #a9b7c6">run</div>
<div style="position:absolute;left:1307.5px;top:302.06px;line-height:20px;font-family:'Liberation Mono', monospace;font-size:16.67px;font-weight:400;font-style:normal;color:#a9b7c6;letter-spacing:0.000px;white-space:pre;-webkit-text-stroke:0.25px #a9b7c6">(SpringbootLear</div>
<div style="position:absolute;left:647.5px;top:357.06px;line-height:20px;font-family:'Liberation Mono', monospace;font-size:16.67px;font-weight:400;font-style:normal;color:#a9b7c6;letter-spacing:0.000px;white-space:pre;-webkit-text-stroke:0.25px #a9b7c6">}</div>
<svg style="position:absolute;left:1429px;top:85px;" width="18" height="14" viewBox="0 0 18 14"><path d="M1.5 7 L6 11.5 L16 2" fill="none" stroke="#499c54" stroke-width="3.2"/></svg>
<svg style="position:absolute;left:634px;top:140px;" width="12" height="15" viewBox="0 0 12 15"><path d="M0.6 0.6 H11.4 V8 L6 13.8 L0.6 8 Z" fill="#313335" stroke="#606366" stroke-width="1.2"/><path d="M3 5.5 H9" stroke="#606366" stroke-width="1.2"/></svg>
<div style="position:absolute;left:639px;top:154px;width:1px;height:10px;background:#555555;"></div>
<svg style="position:absolute;left:634px;top:164px;" width="12" height="15" viewBox="0 0 12 15"><path d="M6 0.6 L11.4 6.2 V14.4 H0.6 V6.2 Z" fill="#313335" stroke="#606366" stroke-width="1.2"/><path d="M3 9.5 H9" stroke="#606366" stroke-width="1.2"/></svg>
<svg style="position:absolute;left:634px;top:305px;" width="12" height="12" viewBox="0 0 12 12"><rect x="0.6" y="0.6" width="10.8" height="10.8" fill="#2b2b2b" stroke="#6b6e70" stroke-width="1.2"/><path d="M2.5 6 H9.5 M6 2.5 V9.5" stroke="#6b6e70" stroke-width="1.1"/></svg>
<svg style="position:absolute;left:598px;top:216px;" width="24" height="24" viewBox="0 0 24 24"><ellipse cx="10.5" cy="10.7" rx="8.2" ry="9.2" transform="rotate(-40 10.5 10.7)" fill="#5aa33f"/><path d="M3.5 3 L15.5 15.5" stroke="#24421f" stroke-width="1.8"/><path d="M14 16 L21.5 15.5 L17 21 Z" fill="#d0d0d0"/></svg>
<svg style="position:absolute;left:604px;top:247.5px;" width="12" height="14" viewBox="0 0 12 14"><path d="M1 0 L11 7 L1 14 Z" fill="#499c54"/></svg>
<svg style="position:absolute;left:604px;top:302.5px;" width="12" height="14" viewBox="0 0 12 14"><path d="M1 0 L11 7 L1 14 Z" fill="#499c54"/></svg>
<div style="position:absolute;left:1454px;top:41px;width:738px;height:634px;background:#3e3f41;"></div>
<div style="position:absolute;left:1454px;top:41px;width:1.5px;height:634px;background:#333537;"></div>
<div style="position:absolute;left:1463.7px;top:50.46px;line-height:20px;font-family:'Liberation Sans', sans-serif;font-size:16px;font-weight:400;font-style:normal;color:#bbbbbb;letter-spacing:-0.172px;white-space:pre;">Gradle</div>
<svg style="position:absolute;left:2135px;top:51px;" width="17" height="17" viewBox="0 0 17 17"><path d="M7 0 H10 L10.5 2.5 L12.5 3.5 L14.7 2.1 L16.8 4.2 L15.4 6.4 L16.2 8.4 L17 8.5 V8.5 L17 10 L14.5 10.5 L13.5 12.5 L14.9 14.7 L12.8 16.8 L10.6 15.4 L10 17 H7 L6.5 14.5 L4.5 13.5 L2.3 14.9 L0.2 12.8 L1.6 10.6 L0.8 8.6 L0 8.5 V7 L2.5 6.5 L3.5 4.5 L2.1 2.3 L4.2 0.2 L6.4 1.6 Z" fill="#afb1b3"/><circle cx="8.5" cy="8.5" r="2.6" fill="#3e3f41"/></svg>
<div style="position:absolute;left:2168px;top:58px;width:16px;height:2.5px;background:#afb1b3;"></div>
<div style="position:absolute;left:1455px;top:75px;width:737px;height:1px;background:#323232;"></div>
<div style="position:absolute;left:1455px;top:110px;width:737px;height:1px;background:#323232;"></div>
<svg style="position:absolute;left:1465px;top:85px;" width="18" height="18" viewBox="0 0 18 18"><path d="M15 7 A6.5 6.5 0 0 0 3 5.5" fill="none" stroke="#afb1b3" stroke-width="2"/><path d="M1 1 L1 8 L8 8 Z" fill="#afb1b3" transform="translate(0,-1)"/><path d="M3 11 A6.5 6.5 0 0 0 15 12.5" fill="none" stroke="#afb1b3" stroke-width="2"/><path d="M17 17 L17 10 L10 10 Z" fill="#afb1b3" transform="translate(0,1)"/></svg>
<svg style="position:absolute;left:1498px;top:86px;" width="16" height="16" viewBox="0 0 16 16"><path d="M8 1 V15 M1 8 H15" stroke="#afb1b3" stroke-width="2.2"/></svg>
<div style="position:absolute;left:1532px;top:93px;width:15px;height:2px;background:#5b5e61;"></div>
<div style="position:absolute;left:1559px;top:82px;width:1px;height:23px;background:#4f5254;"></div>
<svg style="position:absolute;left:1572px;top:85px;" width="16" height="18" viewBox="0 0 16 18"><path d="M8 0 V10" stroke="#afb1b3" stroke-width="2"/><path d="M3 7 L8 12 L13 7 Z" fill="#afb1b3"/><rect x="0" y="15" width="16" height="2.2" fill="#afb1b3"/></svg>
<svg style="position:absolute;left:1604px;top:85px;" width="19" height="17" viewBox="0 0 19 17"><rect x="1" y="1" width="17" height="15" fill="none" stroke="#afb1b3" stroke-width="2"/><rect x="1" y="1" width="17" height="3" fill="#afb1b3"/><path d="M5 7 L11 10.5 L5 14 Z" fill="#59a869"/></svg>
<div style="position:absolute;left:1633px;top:82px;width:1px;height:23px;background:#4f5254;"></div>
<svg style="position:absolute;left:1646px;top:85px;" width="16" height="19" viewBox="0 0 16 19"><rect x="0" y="0" width="16" height="2.2" fill="#afb1b3"/><rect x="0" y="16.8" width="16" height="2.2" fill="#afb1b3"/><path d="M3 8 L8 4 L13 8 Z M3 11 L8 15 L13 11 Z" fill="#afb1b3"/></svg>
<svg style="position:absolute;left:1678px;top:85px;" width="16" height="19" viewBox="0 0 16 19"><rect x="0" y="8.4" width="16" height="2.2" fill="#afb1b3"/><path d="M3 1 L8 6 L13 1 Z M3 18 L8 13 L13 18 Z" fill="#afb1b3"/></svg>
<svg style="position:absolute;left:1710px;top:86px;" width="20" height="18" viewBox="0 0 20 18"><path d="M0 0 H7 L9 2.5 H17 V14 H0 Z" fill="#9da3a8"/><rect x="9" y="8" width="11" height="10" fill="#3e3f41"/><rect x="10" y="9" width="4" height="4" fill="#40b6e0"/><rect x="15" y="9" width="4" height="4" fill="#40b6e0"/><rect x="10" y="14" width="4" height="4" fill="#40b6e0"/><rect x="15" y="14" width="4" height="4" fill="#40b6e0"/></svg>
<div style="position:absolute;left:1739px;top:82px;width:1px;height:23px;background:#4f5254;"></div>
<svg style="position:absolute;left:1749px;top:84px;" width="22" height="20" viewBox="0 0 22 20"><circle cx="11" cy="8" r="6.5" fill="none" stroke="#afb1b3" stroke-width="2.2"/><path d="M15.5 12.5 L20 17" stroke="#afb1b3" stroke-width="2.5"/><rect x="1" y="12" width="2.5" height="6" fill="#62b543"/><rect x="5" y="9" width="2.5" height="9" fill="#40b6e0"/><rect x="9" y="11" width="2.5" height="7" fill="#afb1b3"/></svg>
<svg style="position:absolute;left:1784px;top:85px;" width="19" height="18" viewBox="0 0 19 18"><rect x="0" y="0" width="19" height="3" fill="#afb1b3"/><rect x="0" y="15" width="19" height="3" fill="#afb1b3"/><path d="M5 13 V5 M2 8 L5 4.5 L8 8 M14 13 V5 M11 8 L14 4.5 L17 8" fill="none" stroke="#40b6e0" stroke-width="1.8"/></svg>
<div style="position:absolute;left:1813px;top:82px;width:1px;height:23px;background:#4f5254;"></div>
<svg style="position:absolute;left:1824px;top:84px;" width="20" height="20" viewBox="0 0 20 20"><rect x="1" y="7.5" width="6" height="5" fill="#afb1b3"/><rect x="13" y="7.5" width="6" height="5" fill="#afb1b3"/><path d="M12 1.5 L5.5 18.5 M15.5 1.5 L9 18.5" stroke="#afb1b3" stroke-width="1.6"/></svg>
<div style="position:absolute;left:1854px;top:82px;width:1px;height:23px;background:#4f5254;"></div>
<svg style="position:absolute;left:1866px;top:85px;" width="22" height="20" viewBox="0 0 22 20"><path d="M14 1 C11 1 9 3.5 10 6.5 L2 14 L4.5 16.5 L12 9 C15 10 18 8 18 4.5 L15.5 6.5 L13 5 L14.5 2 Z" fill="#afb1b3"/><path d="M13 15 H21 L17 19 Z" fill="#ffffff"/></svg>
<div style="position:absolute;left:1455px;top:512px;width:737px;height:25px;background:#0d293e;"></div>
<svg style="position:absolute;left:1464px;top:121px;" width="12" height="8" viewBox="0 0 12 8"><path d="M1 1.5 L6 6.5 L11 1.5" fill="none" stroke="#a7a9ab" stroke-width="1.6"/></svg>
<svg style="position:absolute;left:1486px;top:117px;" width="21" height="16" viewBox="0 0 21 16"><path d="M1 15 L1 10 C1 5 5 3 10 3 C12 3 13.5 3.5 14.5 4.5 C14.5 2 16 1 17.5 1 C19 1 19.8 3 19.8 4.5 C19.8 7 18 9 17.5 11 L17.5 15 L14 15 L13.5 12.5 L10.5 12.5 L10 15 L6.5 15 L6 13 L4.5 13 L4.5 15 Z" fill="#9da3a8"/><circle cx="17.4" cy="4" r="1.3" fill="#3e3f41"/><path d="M4 7 Q6 9 8 7" fill="none" stroke="#3e3f41" stroke-width="1" opacity=".6"/></svg>
<div style="position:absolute;left:1509.4px;top:116.46px;line-height:20px;font-family:'Liberation Sans', sans-serif;font-size:16px;font-weight:400;font-style:normal;color:#bbbbbb;letter-spacing:0.464px;white-space:pre;">springboot-learning</div>
<svg style="position:absolute;left:1488px;top:144px;" width="8" height="12" viewBox="0 0 8 12"><path d="M1.5 1 L6.5 6 L1.5 11" fill="none" stroke="#a7a9ab" stroke-width="1.6"/></svg>
<svg style="position:absolute;left:1509px;top:142px;" width="22" height="22" viewBox="0 0 22 22"><path d="M0 0 H7 L9 2.5 H18 V14 H0 Z" fill="#9da3a8"/><circle cx="14" cy="14" r="6.6" fill="#3e3f41"/><path d="M12.50 9.55 L12.88 8.31 L15.12 8.31 L15.50 9.55 L17.11 10.47 L18.37 10.18 L19.49 12.13 L18.61 13.07 L18.61 14.93 L19.49 15.87 L18.37 17.82 L17.11 17.53 L15.50 18.45 L15.12 19.69 L12.88 19.69 L12.50 18.45 L10.89 17.53 L9.63 17.82 L8.51 15.87 L9.39 14.93 L9.39 13.07 L8.51 12.13 L9.63 10.18 L10.89 10.47 Z" fill="#40b6e0"/><circle cx="14" cy="14" r="1.6" fill="#1f3d4d"/></svg>
<div style="position:absolute;left:1532px;top:141.46px;line-height:20px;font-family:'Liberation Sans', sans-serif;font-size:16px;font-weight:400;font-style:normal;color:#bbbbbb;letter-spacing:-0.661px;white-space:pre;">Tasks</div>
<svg style="position:absolute;left:1487px;top:171px;" width="12" height="8" viewBox="0 0 12 8"><path d="M1 1.5 L6 6.5 L11 1.5" fill="none" stroke="#a7a9ab" stroke-width="1.6"/></svg>
<svg style="position:absolute;left:1509px;top:167px;" width="22" height="22" viewBox="0 0 22 22"><path d="M0 0 H7 L9 2.5 H18 V14 H0 Z" fill="#9da3a8"/><rect x="9" y="6" width="11" height="12" fill="#3e3f41"/><rect x="10" y="11" width="2.5" height="7" fill="#62b543"/><rect x="13.5" y="7" width="2.5" height="11" fill="#9da3a8"/><rect x="17" y="9" width="2.5" height="9" fill="#40b6e0"/></svg>
<div style="position:absolute;left:1532px;top:166.46px;line-height:20px;font-family:'Liberation Sans', sans-serif;font-size:16px;font-weight:400;font-style:normal;color:#bbbbbb;letter-spacing:0.000px;white-space:pre;">Dependencies</div>
<svg style="position:absolute;left:1509px;top:196px;" width="12" height="8" viewBox="0 0 12 8"><path d="M1 1.5 L6 6.5 L11 1.5" fill="none" stroke="#a7a9ab" stroke-width="1.6"/></svg>
<svg style="position:absolute;left:1531px;top:192px;" width="22" height="22" viewBox="0 0 22 22"><path d="M0 0 H7 L9 2.5 H18 V14 H0 Z" fill="#9da3a8"/><rect x="9" y="6" width="11" height="12" fill="#3e3f41"/><rect x="10" y="11" width="2.5" height="7" fill="#62b543"/><rect x="13.5" y="7" width="2.5" height="11" fill="#9da3a8"/><rect x="17" y="9" width="2.5" height="9" fill="#40b6e0"/></svg>
<div style="position:absolute;left:1554px;top:191.46px;line-height:20px;font-family:'Liberation Sans', sans-serif;font-size:16px;font-weight:400;font-style:normal;color:#bbbbbb;letter-spacing:0.089px;white-space:pre;">compileClasspath</div>
<svg style="position:absolute;left:1554.5px;top:216.5px;" width="19" height="17" viewBox="0 0 19 17"><rect x="0" y="3" width="2.5" height="12.5" fill="#9da3a8"/><rect x="4" y="3" width="2.5" height="12.5" fill="#62b543"/><rect x="7.5" y="0" width="2.5" height="15.5" fill="#b4b8bc"/><rect x="11" y="3" width="2.5" height="12.5" fill="#40b6e0"/><rect x="15" y="4" width="2.5" height="11.5" fill="#9da3a8"/></svg>
<div style="position:absolute;left:1576.5px;top:216.46px;line-height:20px;font-family:'Liberation Sans', sans-serif;font-size:16px;font-weight:400;font-style:normal;color:#bbbbbb;letter-spacing:0.452px;white-space:pre;">org.projectlombok:lombok:1.18.30</div>
<svg style="position:absolute;left:1532.5px;top:244px;" width="8" height="12" viewBox="0 0 8 12"><path d="M1.5 1 L6.5 6 L1.5 11" fill="none" stroke="#a7a9ab" stroke-width="1.6"/></svg>
<svg style="position:absolute;left:1554.5px;top:241.5px;" width="19" height="17" viewBox="0 0 19 17"><rect x="0" y="3" width="2.5" height="12.5" fill="#9da3a8"/><rect x="4" y="3" width="2.5" height="12.5" fill="#62b543"/><rect x="7.5" y="0" width="2.5" height="15.5" fill="#b4b8bc"/><rect x="11" y="3" width="2.5" height="12.5" fill="#40b6e0"/><rect x="15" y="4" width="2.5" height="11.5" fill="#9da3a8"/></svg>
<div style="position:absolute;left:1576.5px;top:241.46px;line-height:20px;font-family:'Liberation Sans', sans-serif;font-size:16px;font-weight:400;font-style:normal;color:#bbbbbb;letter-spacing:0.435px;white-space:pre;">org.springframework.boot:spring-boot-starter-web:3.2.3</div>
<svg style="position:absolute;left:1509px;top:271px;" width="12" height="8" viewBox="0 0 12 8"><path d="M1 1.5 L6 6.5 L11 1.5" fill="none" stroke="#a7a9ab" stroke-width="1.6"/></svg>
<svg style="position:absolute;left:1531px;top:267px;" width="22" height="22" viewBox="0 0 22 22"><path d="M0 0 H7 L9 2.5 H18 V14 H0 Z" fill="#9da3a8"/><rect x="9" y="6" width="11" height="12" fill="#3e3f41"/><rect x="10" y="11" width="2.5" height="7" fill="#62b543"/><rect x="13.5" y="7" width="2.5" height="11" fill="#9da3a8"/><rect x="17" y="9" width="2.5" height="9" fill="#40b6e0"/></svg>
<div style="position:absolute;left:1554px;top:266.46px;line-height:20px;font-family:'Liberation Sans', sans-serif;font-size:16px;font-weight:400;font-style:normal;color:#bbbbbb;letter-spacing:0.094px;white-space:pre;">runtimeClasspath</div>
<svg style="position:absolute;left:1531.5px;top:296px;" width="12" height="8" viewBox="0 0 12 8"><path d="M1 1.5 L6 6.5 L11 1.5" fill="none" stroke="#a7a9ab" stroke-width="1.6"/></svg>
<svg style="position:absolute;left:1554.5px;top:291.5px;" width="19" height="17" viewBox="0 0 19 17"><rect x="0" y="3" width="2.5" height="12.5" fill="#9da3a8"/><rect x="4" y="3" width="2.5" height="12.5" fill="#62b543"/><rect x="7.5" y="0" width="2.5" height="15.5" fill="#b4b8bc"/><rect x="11" y="3" width="2.5" height="12.5" fill="#40b6e0"/><rect x="15" y="4" width="2.5" height="11.5" fill="#9da3a8"/></svg>
<div style="position:absolute;left:1576.5px;top:291.46px;line-height:20px;font-family:'Liberation Sans', sans-serif;font-size:16px;font-weight:400;font-style:normal;color:#bbbbbb;letter-spacing:0.435px;white-space:pre;">org.springframework.boot:spring-boot-starter-web:3.2.3</div>
<svg style="position:absolute;left:1555.4px;top:319px;" width="8" height="12" viewBox="0 0 8 12"><path d="M1.5 1 L6.5 6 L1.5 11" fill="none" stroke="#a7a9ab" stroke-width="1.6"/></svg>
<svg style="position:absolute;left:1577.4px;top:316.5px;" width="19" height="17" viewBox="0 0 19 17"><rect x="0" y="3" width="2.5" height="12.5" fill="#9da3a8"/><rect x="4" y="3" width="2.5" height="12.5" fill="#62b543"/><rect x="7.5" y="0" width="2.5" height="15.5" fill="#b4b8bc"/><rect x="11" y="3" width="2.5" height="12.5" fill="#40b6e0"/><rect x="15" y="4" width="2.5" height="11.5" fill="#9da3a8"/></svg>
<div style="position:absolute;left:1599.4px;top:316.46px;line-height:20px;font-family:'Liberation Sans', sans-serif;font-size:16px;font-weight:400;font-style:normal;color:#bbbbbb;letter-spacing:0.415px;white-space:pre;">org.springframework.boot:spring-boot-starter-json:3.2.3</div>
<svg style="position:absolute;left:1555.4px;top:344px;" width="8" height="12" viewBox="0 0 8 12"><path d="M1.5 1 L6.5 6 L1.5 11" fill="none" stroke="#a7a9ab" stroke-width="1.6"/></svg>
<svg style="position:absolute;left:1577.4px;top:341.5px;" width="19" height="17" viewBox="0 0 19 17"><rect x="0" y="3" width="2.5" height="12.5" fill="#9da3a8"/><rect x="4" y="3" width="2.5" height="12.5" fill="#62b543"/><rect x="7.5" y="0" width="2.5" height="15.5" fill="#b4b8bc"/><rect x="11" y="3" width="2.5" height="12.5" fill="#40b6e0"/><rect x="15" y="4" width="2.5" height="11.5" fill="#9da3a8"/></svg>
<div style="position:absolute;left:1599.4px;top:341.46px;line-height:20px;font-family:'Liberation Sans', sans-serif;font-size:16px;font-weight:400;font-style:normal;color:#bbbbbb;letter-spacing:0.457px;white-space:pre;">org.springframework.boot:spring-boot-starter-tomcat:3.2.3</div>
<svg style="position:absolute;left:1555.4px;top:369px;" width="8" height="12" viewBox="0 0 8 12"><path d="M1.5 1 L6.5 6 L1.5 11" fill="none" stroke="#a7a9ab" stroke-width="1.6"/></svg>
<svg style="position:absolute;left:1577.4px;top:366.5px;" width="19" height="17" viewBox="0 0 19 17"><rect x="0" y="3" width="2.5" height="12.5" fill="#9da3a8"/><rect x="4" y="3" width="2.5" height="12.5" fill="#62b543"/><rect x="7.5" y="0" width="2.5" height="15.5" fill="#b4b8bc"/><rect x="11" y="3" width="2.5" height="12.5" fill="#40b6e0"/><rect x="15" y="4" width="2.5" height="11.5" fill="#9da3a8"/></svg>
<div style="position:absolute;left:1599.4px;top:366.46px;line-height:20px;font-family:'Liberation Sans', sans-serif;font-size:16px;font-weight:400;font-style:normal;color:#bbbbbb;letter-spacing:0.424px;white-space:pre;">org.springframework.boot:spring-boot-starter:3.2.3</div>
<svg style="position:absolute;left:1577.4px;top:391.5px;" width="19" height="17" viewBox="0 0 19 17"><rect x="0" y="3" width="2.5" height="12.5" fill="#9da3a8"/><rect x="4" y="3" width="2.5" height="12.5" fill="#62b543"/><rect x="7.5" y="0" width="2.5" height="15.5" fill="#b4b8bc"/><rect x="11" y="3" width="2.5" height="12.5" fill="#40b6e0"/><rect x="15" y="4" width="2.5" height="11.5" fill="#9da3a8"/></svg>
<div style="position:absolute;left:1599.4px;top:391.46px;line-height:20px;font-family:'Liberation Sans', sans-serif;font-size:16px;font-weight:400;font-style:normal;color:#bbbbbb;letter-spacing:0.253px;white-space:pre;">org.springframework:spring-web:6.1.4 (*)</div>
<svg style="position:absolute;left:1555.4px;top:419px;" width="8" height="12" viewBox="0 0 8 12"><path d="M1.5 1 L6.5 6 L1.5 11" fill="none" stroke="#a7a9ab" stroke-width="1.6"/></svg>
<svg style="position:absolute;left:1577.4px;top:416.5px;" width="19" height="17" viewBox="0 0 19 17"><rect x="0" y="3" width="2.5" height="12.5" fill="#9da3a8"/><rect x="4" y="3" width="2.5" height="12.5" fill="#62b543"/><rect x="7.5" y="0" width="2.5" height="15.5" fill="#b4b8bc"/><rect x="11" y="3" width="2.5" height="12.5" fill="#40b6e0"/><rect x="15" y="4" width="2.5" height="11.5" fill="#9da3a8"/></svg>
<div style="position:absolute;left:1599.4px;top:416.46px;line-height:20px;font-family:'Liberation Sans', sans-serif;font-size:16px;font-weight:400;font-style:normal;color:#bbbbbb;letter-spacing:0.293px;white-space:pre;">org.springframework:spring-webmvc:6.1.4</div>
<svg style="position:absolute;left:1509px;top:446px;" width="12" height="8" viewBox="0 0 12 8"><path d="M1 1.5 L6 6.5 L11 1.5" fill="none" stroke="#a7a9ab" stroke-width="1.6"/></svg>
<svg style="position:absolute;left:1531px;top:442px;" width="22" height="22" viewBox="0 0 22 22"><path d="M0 0 H7 L9 2.5 H18 V14 H0 Z" fill="#9da3a8"/><rect x="9" y="6" width="11" height="12" fill="#3e3f41"/><rect x="10" y="11" width="2.5" height="7" fill="#62b543"/><rect x="13.5" y="7" width="2.5" height="11" fill="#9da3a8"/><rect x="17" y="9" width="2.5" height="9" fill="#40b6e0"/></svg>
<div style="position:absolute;left:1554px;top:441.46px;line-height:20px;font-family:'Liberation Sans', sans-serif;font-size:16px;font-weight:400;font-style:normal;color:#bbbbbb;letter-spacing:0.059px;white-space:pre;">testCompileClasspath</div>
<svg style="position:absolute;left:1532.5px;top:469px;" width="8" height="12" viewBox="0 0 8 12"><path d="M1.5 1 L6.5 6 L1.5 11" fill="none" stroke="#a7a9ab" stroke-width="1.6"/></svg>
<svg style="position:absolute;left:1554.5px;top:466.5px;" width="19" height="17" viewBox="0 0 19 17"><rect x="0" y="3" width="2.5" height="12.5" fill="#9da3a8"/><rect x="4" y="3" width="2.5" height="12.5" fill="#62b543"/><rect x="7.5" y="0" width="2.5" height="15.5" fill="#b4b8bc"/><rect x="11" y="3" width="2.5" height="12.5" fill="#40b6e0"/><rect x="15" y="4" width="2.5" height="11.5" fill="#9da3a8"/></svg>
<div style="position:absolute;left:1576.5px;top:466.46px;line-height:20px;font-family:'Liberation Sans', sans-serif;font-size:16px;font-weight:400;font-style:normal;color:#bbbbbb;letter-spacing:0.427px;white-space:pre;">org.springframework.boot:spring-boot-starter-test:3.2.3</div>
<svg style="position:absolute;left:1532.5px;top:494px;" width="8" height="12" viewBox="0 0 8 12"><path d="M1.5 1 L6.5 6 L1.5 11" fill="none" stroke="#a7a9ab" stroke-width="1.6"/></svg>
<svg style="position:absolute;left:1554.5px;top:491.5px;" width="19" height="17" viewBox="0 0 19 17"><rect x="0" y="3" width="2.5" height="12.5" fill="#9da3a8"/><rect x="4" y="3" width="2.5" height="12.5" fill="#62b543"/><rect x="7.5" y="0" width="2.5" height="15.5" fill="#b4b8bc"/><rect x="11" y="3" width="2.5" height="12.5" fill="#40b6e0"/><rect x="15" y="4" width="2.5" height="11.5" fill="#9da3a8"/></svg>
<div style="position:absolute;left:1576.5px;top:491.46px;line-height:20px;font-family:'Liberation Sans', sans-serif;font-size:16px;font-weight:400;font-style:normal;color:#bbbbbb;letter-spacing:0.432px;white-space:pre;">org.springframework.boot:spring-boot-starter-web:3.2.3</div>
<svg style="position:absolute;left:1509px;top:521px;" width="12" height="8" viewBox="0 0 12 8"><path d="M1 1.5 L6 6.5 L11 1.5" fill="none" stroke="#a7a9ab" stroke-width="1.6"/></svg>
<svg style="position:absolute;left:1531px;top:517px;" width="22" height="22" viewBox="0 0 22 22"><path d="M0 0 H7 L9 2.5 H18 V14 H0 Z" fill="#9da3a8"/><rect x="9" y="6" width="11" height="12" fill="#3e3f41"/><rect x="10" y="11" width="2.5" height="7" fill="#62b543"/><rect x="13.5" y="7" width="2.5" height="11" fill="#9da3a8"/><rect x="17" y="9" width="2.5" height="9" fill="#40b6e0"/></svg>
<div style="position:absolute;left:1554px;top:516.46px;line-height:20px;font-family:'Liberation Sans', sans-serif;font-size:16px;font-weight:400;font-style:normal;color:#bbbbbb;letter-spacing:0.014px;white-space:pre;">testRuntimeClasspath</div>
<svg style="position:absolute;left:1532.5px;top:544px;" width="8" height="12" viewBox="0 0 8 12"><path d="M1.5 1 L6.5 6 L1.5 11" fill="none" stroke="#a7a9ab" stroke-width="1.6"/></svg>
<svg style="position:absolute;left:1554.5px;top:541.5px;" width="19" height="17" viewBox="0 0 19 17"><rect x="0" y="3" width="2.5" height="12.5" fill="#9da3a8"/><rect x="4" y="3" width="2.5" height="12.5" fill="#62b543"/><rect x="7.5" y="0" width="2.5" height="15.5" fill="#b4b8bc"/><rect x="11" y="3" width="2.5" height="12.5" fill="#40b6e0"/><rect x="15" y="4" width="2.5" height="11.5" fill="#9da3a8"/></svg>
<div style="position:absolute;left:1576.5px;top:541.46px;line-height:20px;font-family:'Liberation Sans', sans-serif;font-size:16px;font-weight:400;font-style:normal;color:#bbbbbb;letter-spacing:0.427px;white-space:pre;">org.springframework.boot:spring-boot-starter-test:3.2.3</div>
<svg style="position:absolute;left:1532.5px;top:569px;" width="8" height="12" viewBox="0 0 8 12"><path d="M1.5 1 L6.5 6 L1.5 11" fill="none" stroke="#a7a9ab" stroke-width="1.6"/></svg>
<svg style="position:absolute;left:1554.5px;top:566.5px;" width="19" height="17" viewBox="0 0 19 17"><rect x="0" y="3" width="2.5" height="12.5" fill="#9da3a8"/><rect x="4" y="3" width="2.5" height="12.5" fill="#62b543"/><rect x="7.5" y="0" width="2.5" height="15.5" fill="#b4b8bc"/><rect x="11" y="3" width="2.5" height="12.5" fill="#40b6e0"/><rect x="15" y="4" width="2.5" height="11.5" fill="#9da3a8"/></svg>
<div style="position:absolute;left:1576.5px;top:566.46px;line-height:20px;font-family:'Liberation Sans', sans-serif;font-size:16px;font-weight:400;font-style:normal;color:#bbbbbb;letter-spacing:0.432px;white-space:pre;">org.springframework.boot:spring-boot-starter-web:3.2.3</div>
<svg style="position:absolute;left:1487px;top:596px;" width="12" height="8" viewBox="0 0 12 8"><path d="M1 1.5 L6 6.5 L11 1.5" fill="none" stroke="#a7a9ab" stroke-width="1.6"/></svg>
<svg style="position:absolute;left:1509px;top:592px;" width="22" height="22" viewBox="0 0 22 22"><path d="M0 0 H7 L9 2.5 H18 V14 H0 Z" fill="#9da3a8"/><circle cx="14" cy="14" r="6.6" fill="#3e3f41"/><path d="M12.50 9.55 L12.88 8.31 L15.12 8.31 L15.50 9.55 L17.11 10.47 L18.37 10.18 L19.49 12.13 L18.61 13.07 L18.61 14.93 L19.49 15.87 L18.37 17.82 L17.11 17.53 L15.50 18.45 L15.12 19.69 L12.88 19.69 L12.50 18.45 L10.89 17.53 L9.63 17.82 L8.51 15.87 L9.39 14.93 L9.39 13.07 L8.51 12.13 L9.63 10.18 L10.89 10.47 Z" fill="#40b6e0"/><circle cx="14" cy="14" r="1.6" fill="#1f3d4d"/></svg>
<div style="position:absolute;left:1532px;top:591.46px;line-height:20px;font-family:'Liberation Sans', sans-serif;font-size:16px;font-weight:400;font-style:normal;color:#bbbbbb;letter-spacing:0.013px;white-space:pre;">Run Configurations</div>
<svg style="position:absolute;left:1530px;top:617px;" width="21" height="16" viewBox="0 0 21 16"><path d="M1 15 L1 10 C1 5 5 3 10 3 C12 3 13.5 3.5 14.5 4.5 C14.5 2 16 1 17.5 1 C19 1 19.8 3 19.8 4.5 C19.8 7 18 9 17.5 11 L17.5 15 L14 15 L13.5 12.5 L10.5 12.5 L10 15 L6.5 15 L6 13 L4.5 13 L4.5 15 Z" fill="#6e7173"/><circle cx="17.4" cy="4" r="1.3" fill="#3e3f41"/><path d="M4 7 Q6 9 8 7" fill="none" stroke="#3e3f41" stroke-width="1" opacity=".6"/></svg>
<div style="position:absolute;left:1554.8px;top:616.46px;line-height:20px;font-family:'Liberation Sans', sans-serif;font-size:16px;font-weight:400;font-style:normal;color:#bbbbbb;letter-spacing:0.469px;white-space:pre;">springboot-learning</div>
<div style="position:absolute;left:2192px;top:41px;width:22px;height:634px;background:#3e3f41;"></div>
<div style="position:absolute;left:2192px;top:44px;width:1px;height:631px;background:#2f3133;"></div>
<div style="position:absolute;left:2192px;top:170px;width:22px;height:84px;background:#2d2f31;"></div>
<svg style="position:absolute;left:2197px;top:54px;" width="18" height="20" viewBox="0 0 18 20"><path d="M2 14 C3 12 3 9 3.5 7 C4 4 6 2.5 9 2.5 C12 2.5 14 4 14.5 7 C15 9 15 12 16 14 Z" fill="#afb1b3"/><rect x="7" y="15" width="4" height="2" fill="#afb1b3"/><circle cx="15" cy="4" r="3.5" fill="#3592c4"/></svg>
<div style="position:absolute;left:2194px;top:76px;transform-origin:0 0;transform:translate(0,0) rotate(90deg) translate(0,-20px);font-family:'Liberation Sans',sans-serif;font-size:14px;line-height:20px;color:#bbbbbb;white-space:pre;letter-spacing:0.3px">Notifications</div>
<svg style="position:absolute;left:2197px;top:183px;" width="18" height="14" viewBox="0 0 18 14"><path d="M1 12 C0 8 2 4 7 3 C10 2.5 12 3.5 13 4.5 C13.5 2 16.5 1.5 17 4 C17 6 15.5 6.5 15 8 L15 12 L12.5 12 L12.5 10 L9 10 L9 12 L5.5 12 L5.5 10.5 L3 10.5 Z" fill="#afb1b3"/></svg>
<div style="position:absolute;left:2194px;top:203px;transform-origin:0 0;transform:translate(20px,0) rotate(90deg);font-family:'Liberation Sans',sans-serif;font-size:14px;line-height:20px;color:#dcdcdc;white-space:pre">Gradle</div>
<svg style="position:absolute;left:2198px;top:268px;" width="14" height="16" viewBox="0 0 14 16"><ellipse cx="7" cy="3" rx="6" ry="2.5" fill="#afb1b3"/><path d="M1 5 V7 C1 9 13 9 13 7 V5 C13 7 1 7 1 5 Z M1 9 V11 C1 13 13 13 13 11 V9 C13 11 1 11 1 9 Z M1 13 V14 C1 16 13 16 13 14 V13 C13 15 1 15 1 13Z" fill="#afb1b3"/></svg>
<div style="position:absolute;left:2194px;top:289px;transform-origin:0 0;transform:translate(20px,0) rotate(90deg);font-family:'Liberation Sans',sans-serif;font-size:14px;line-height:20px;color:#bbbbbb;white-space:pre">Database</div>
<div style="position:absolute;left:0px;top:40px;width:2214px;height:2px;background:#2f3133;"></div>
<svg style="position:absolute;left:2040px;top:648px;" width="174" height="20" viewBox="0 0 174 20"><path transform="translate(7.7,1)" d="M11.5 5.5 V11 C11.5 13 14.5 13 15 9.5 C15.5 4.5 12 1.5 8 1.5 C4 1.5 1 5 1 9 C1 13.5 4 16.5 8.5 16.5 C10.5 16.5 12 16 13 15.3 M10.8 8.8 C10.8 6.5 9.5 5.5 8 5.5 C6 5.5 5 7.3 5 9 C5 11 6 12 7.5 12 C9.5 12 10.8 10.8 10.8 8.8" fill="none" stroke="#2a2b2d" stroke-width="1.3" opacity=".8"/><path transform="translate(6.7,0)" d="M11.5 5.5 V11 C11.5 13 14.5 13 15 9.5 C15.5 4.5 12 1.5 8 1.5 C4 1.5 1 5 1 9 C1 13.5 4 16.5 8.5 16.5 C10.5 16.5 12 16 13 15.3 M10.8 8.8 C10.8 6.5 9.5 5.5 8 5.5 C6 5.5 5 7.3 5 9 C5 11 6 12 7.5 12 C9.5 12 10.8 10.8 10.8 8.8" fill="none" stroke="#9a9b9c" stroke-width="1.05"/><path transform="translate(25.0,1)" d="M5.5 1 L1 2.5 M1 5.5 H6.5 M3.8 2 V16 M3.8 6 L0.5 12 M3.8 6.5 L6.5 10 M8 1 L14 5 M14 1 L8 5 M7.5 6.5 H16 M10 6.5 L7.5 10 M9 9.5 H15 V14 M12 7.5 V16 M9 9.5 V14" fill="none" stroke="#2a2b2d" stroke-width="1.3" opacity=".8"/><path transform="translate(24.0,0)" d="M5.5 1 L1 2.5 M1 5.5 H6.5 M3.8 2 V16 M3.8 6 L0.5 12 M3.8 6.5 L6.5 10 M8 1 L14 5 M14 1 L8 5 M7.5 6.5 H16 M10 6.5 L7.5 10 M9 9.5 H15 V14 M12 7.5 V16 M9 9.5 V14" fill="none" stroke="#9a9b9c" stroke-width="1.05"/><path transform="translate(43.0,1)" d="M3 6 H13 M8 1 V15.5 M1 15.5 H15" fill="none" stroke="#2a2b2d" stroke-width="1.3" opacity=".8"/><path transform="translate(42.0,0)" d="M3 6 H13 M8 1 V15.5 M1 15.5 H15" fill="none" stroke="#9a9b9c" stroke-width="1.05"/><path transform="translate(61.0,1)" d="M0.5 5.5 H5.5 M3 1 V15 L1.5 14 M0.5 11 L5.5 8.5 M7 2 H15 V6 H7 M7 2 V10 C7 13 6.5 15 6 16 M8.5 9 V15.5 H15.5 V9 M12 7.5 V15.5" fill="none" stroke="#2a2b2d" stroke-width="1.3" opacity=".8"/><path transform="translate(60.0,0)" d="M0.5 5.5 H5.5 M3 1 V15 L1.5 14 M0.5 11 L5.5 8.5 M7 2 H15 V6 H7 M7 2 V10 C7 13 6.5 15 6 16 M8.5 9 V15.5 H15.5 V9 M12 7.5 V15.5" fill="none" stroke="#9a9b9c" stroke-width="1.05"/><path transform="translate(79.0,1)" d="M8 0.5 L1 7 M8 0.5 L15 7 M4.5 7.5 H11.5 M3 10.5 H13 M8 7.5 V15.5 M5 12 L6 14 M11 12 L10 14 M1 15.5 H15" fill="none" stroke="#2a2b2d" stroke-width="1.3" opacity=".8"/><path transform="translate(78.0,0)" d="M8 0.5 L1 7 M8 0.5 L15 7 M4.5 7.5 H11.5 M3 10.5 H13 M8 7.5 V15.5 M5 12 L6 14 M11 12 L10 14 M1 15.5 H15" fill="none" stroke="#9a9b9c" stroke-width="1.05"/><path transform="translate(98.0,1)" d="M0.5 5.5 H5.5 M3 1 V15 L1.5 14 M0.5 11 L5.5 8.5 M7 4 H15.5 M11.3 1 V7 M8 8 H14 L8 15.5 M9.5 10 L15.5 15.5" fill="none" stroke="#2a2b2d" stroke-width="1.3" opacity=".8"/><path transform="translate(97.0,0)" d="M0.5 5.5 H5.5 M3 1 V15 L1.5 14 M0.5 11 L5.5 8.5 M7 4 H15.5 M11.3 1 V7 M8 8 H14 L8 15.5 M9.5 10 L15.5 15.5" fill="none" stroke="#9a9b9c" stroke-width="1.05"/><path transform="translate(115.0,1)" d="M1 6 H15 M8 1 V16 M8 6 L2 14 M8 6 L14 14 M11 2 L12.5 3.5" fill="none" stroke="#2a2b2d" stroke-width="1.3" opacity=".8"/><path transform="translate(114.0,0)" d="M1 6 H15 M8 1 V16 M8 6 L2 14 M8 6 L14 14 M11 2 L12.5 3.5" fill="none" stroke="#9a9b9c" stroke-width="1.05"/><path transform="translate(133.0,1)" d="M2.5 1 L3.5 2.5 M1 5 H6 L2 11 M4 8 V16 M5 9 L6.5 10.5 M8 6 H15 M11.5 1.5 V15 M7.5 15.5 H16" fill="none" stroke="#2a2b2d" stroke-width="1.3" opacity=".8"/><path transform="translate(132.0,0)" d="M2.5 1 L3.5 2.5 M1 5 H6 L2 11 M4 8 V16 M5 9 L6.5 10.5 M8 6 H15 M11.5 1.5 V15 M7.5 15.5 H16" fill="none" stroke="#9a9b9c" stroke-width="1.05"/><path transform="translate(150.5,1)" d="M2 2 H15 M2 2 V15.5 H15.5 M5 5 L13 13 M13 5 L5 13" fill="none" stroke="#2a2b2d" stroke-width="1.3" opacity=".8"/><path transform="translate(149.5,0)" d="M2 2 H15 M2 2 V15.5 H15.5 M5 5 L13 13 M13 5 L5 13" fill="none" stroke="#9a9b9c" stroke-width="1.05"/></svg>
</body></html>
